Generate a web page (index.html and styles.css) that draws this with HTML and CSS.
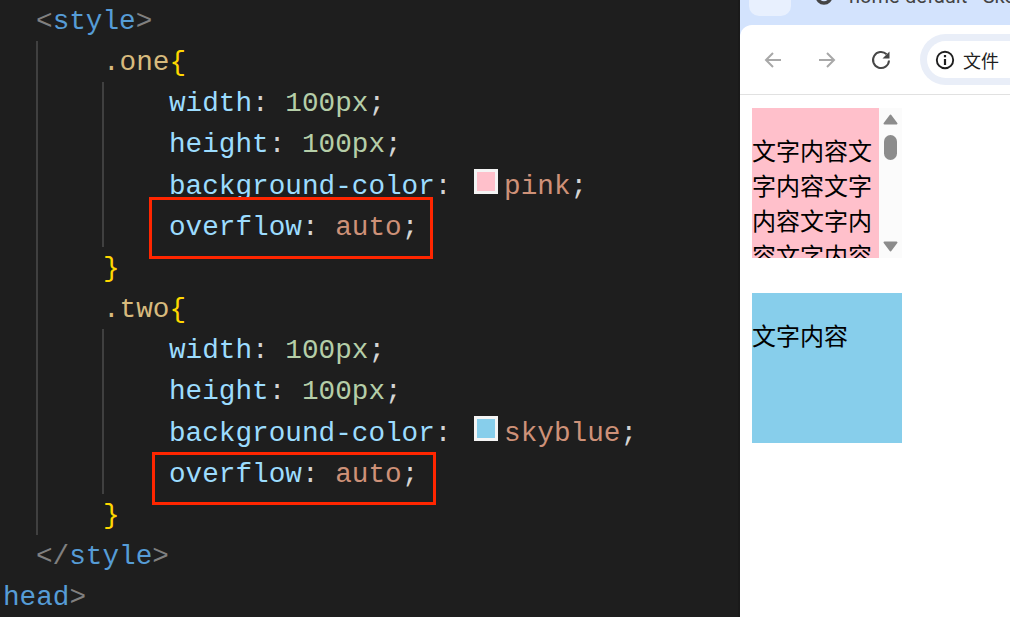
FILE: index.html
```html
<!DOCTYPE html>
<html lang="zh">
<head>
<meta charset="utf-8">
<title>overflow: auto</title>
<link rel="stylesheet" href="styles.css">
</head>
<body>
<div class="screen">
  <main class="editor">
    <div class="code">
      <div class="line lvl1"><span class="p">&lt;</span><span class="t">style</span><span class="p">&gt;</span></div>
      <div class="guide outer">
        <div class="line lvl2"><span class="s">.one</span><span class="b">{</span></div>
        <div class="guide inner">
          <div class="line lvl3"><span class="k">width</span><span class="w">: </span><span class="n">100px</span><span class="w">;</span></div>
          <div class="line lvl3"><span class="k">height</span><span class="w">: </span><span class="n">100px</span><span class="w">;</span></div>
          <div class="line lvl3"><span class="k">background-color</span><span class="w">: </span><span class="swatch pink"></span><span class="v">pink</span><span class="w">;</span></div>
          <div class="line lvl3 boxed box-one"><span class="k">overflow</span><span class="w">: </span><span class="v">auto</span><span class="w">;</span></div>
        </div>
        <div class="line lvl2"><span class="b">}</span></div>
        <div class="line lvl2"><span class="s">.two</span><span class="b">{</span></div>
        <div class="guide inner">
          <div class="line lvl3"><span class="k">width</span><span class="w">: </span><span class="n">100px</span><span class="w">;</span></div>
          <div class="line lvl3"><span class="k">height</span><span class="w">: </span><span class="n">100px</span><span class="w">;</span></div>
          <div class="line lvl3"><span class="k">background-color</span><span class="w">: </span><span class="swatch blue"></span><span class="v">skyblue</span><span class="w">;</span></div>
          <div class="line lvl3 boxed box-two"><span class="k">overflow</span><span class="w">: </span><span class="v">auto</span><span class="w">;</span></div>
        </div>
        <div class="line lvl2"><span class="b">}</span></div>
      </div>
      <div class="line lvl1"><span class="p">&lt;/</span><span class="t">style</span><span class="p">&gt;</span></div>
      <div class="line lvl0"><span class="t">head</span><span class="p">&gt;</span></div>
    </div>
  </main>
  <section class="browser">
    <div class="tabstrip">
      <div class="tab-prev"></div>
      <div class="tab-current">
        <svg class="favicon" viewBox="0 0 18 18"><circle cx="9" cy="9" r="7" fill="none" stroke="#444" stroke-width="3.4"/></svg>
        <span class="tab-title">home-default - Skeleton</span>
      </div>
    </div>
    <div class="toolbar">
      <svg class="nav" viewBox="0 0 20 20"><path d="M18 10H3M10 3l-7 7 7 7" fill="none" stroke="#a8a8a8" stroke-width="2"/></svg>
      <svg class="nav" viewBox="0 0 20 20"><path d="M2 10h15M10 3l7 7-7 7" fill="none" stroke="#a8a8a8" stroke-width="2"/></svg>
      <svg class="nav" viewBox="0 0 20 20"><path d="M18 10.5a8 8 0 1 1-2.4-6.2" fill="none" stroke="#474747" stroke-width="2"/><path d="M18.5 1.5v7h-7z" fill="#474747"/></svg>
      <div class="omnibox">
        <div class="chip">
          <svg class="info" viewBox="0 0 20 20"><circle cx="10" cy="10" r="8.2" fill="none" stroke="#1f1f1f" stroke-width="1.9"/><path d="M10 9v6M10 5v2.2" stroke="#1f1f1f" stroke-width="2.2" fill="none"/></svg>
          <span class="chip-text">文件</span>
        </div>
      </div>
    </div>
    <div class="page">
      <div class="demo one">
        <div class="demo-text">文字内容文字内容文字内容文字内容文字内容</div>
        <div class="scrollbar">
          <svg class="arrow" viewBox="0 0 15 11"><path d="M7.5 1.5L13.5 9.5H1.5z" fill="#8c8c8c" stroke="#8c8c8c" stroke-width="2" stroke-linejoin="round"/></svg>
          <span class="thumb"></span>
          <svg class="arrow down" viewBox="0 0 15 11"><path d="M7.5 9.5L13.5 1.5H1.5z" fill="#8c8c8c" stroke="#8c8c8c" stroke-width="2" stroke-linejoin="round"/></svg>
        </div>
      </div>
      <div class="demo two">
        <div class="demo-text">文字内容</div>
      </div>
    </div>
  </section>
</div>
</body>
</html>
```
FILE: styles.css
```css
* { box-sizing: border-box; }
html, body { margin: 0; padding: 0; }
body { width: 1010px; height: 617px; overflow: hidden; background: #fff; }
.screen { display: flex; width: 1010px; height: 617px; overflow: hidden; }

.editor { width: 740px; flex: none; background: #1e1e1e; overflow: hidden; border-right: 2px solid #1a1a1a; }
.code {
  padding-left: 3px;
  font-family: "Liberation Mono", monospace;
  font-size: 27.7px;
  line-height: 41.17px;
}
.line { height: 41.17px; padding-top: 2px; position: relative; display: flex; align-items: center; white-space: pre; }
.lvl1 { margin-left: 33px; }
.guide { border-left: 2px solid #404040; }
.guide.outer { margin-left: 33px; }
.guide.outer > .line { margin-left: 65px; }
.guide.inner { margin-left: 64px; }
.guide.inner > .line { margin-left: 65px; }

.p { color: #808080; }
.t { color: #569cd6; }
.s { color: #d7ba7d; }
.b { color: #ffd700; }
.k { color: #9cdcfe; }
.w { color: #d4d4d4; }
.n { color: #b5cea8; }
.v { color: #ce9178; }

.swatch { width: 24px; height: 25px; border: 3px solid #f4f4f4; margin: 0 6px 9px 6px; flex: none; }
.swatch.pink { background: #ffc0cb; }
.swatch.blue { background: #87ceeb; }

.boxed::after {
  content: "";
  position: absolute;
  box-sizing: border-box;
  border: 3px solid #ff2600;
  width: 284px;
}
.box-one::after { left: -20px; top: -9px; height: 62px; }
.box-two::after { left: -17px; top: -1px; height: 53px; }

.browser { flex: 1; min-width: 0; display: flex; flex-direction: column; background: #d3e3fd; }
.tabstrip { height: 25px; flex: none; display: flex; padding-left: 9px; overflow: hidden; }
.tab-prev { width: 42px; height: 16px; background: #e8f0fe; border-radius: 0 0 10px 10px; flex: none; }
.tab-current { display: flex; align-items: center; gap: 16px; margin: -20px 0 0 24px; height: 32px; white-space: nowrap; }
.favicon { width: 18px; height: 18px; flex: none; }
.tab-title { font: 20px "Roboto", sans-serif; color: #444; }

.toolbar {
  height: 70px; flex: none;
  background: #fff;
  border-radius: 12px 0 0 0;
  border-bottom: 1px solid #e1e1e1;
  display: flex; align-items: center;
  padding: 0 0 0 23px;
  gap: 34px;
}
.nav { width: 20px; height: 20px; flex: none; }
.omnibox {
  flex: 1; height: 51px; margin-left: -5px; margin-right: -40px;
  background: #e9eef8;
  border-radius: 26px 0 0 26px;
  padding: 7px 0 7px 7px;
}
.chip { height: 37px; background: #fff; border-radius: 19px 0 0 19px; display: flex; align-items: center; padding-left: 8px; gap: 8px; }
.info { width: 20px; height: 20px; flex: none; }
.chip-text { font: 18px "Noto Sans CJK SC", sans-serif; color: #1f1f1f; }

.page { flex: 1; background: #fff; padding: 13px 0 0 12px; display: flex; flex-direction: column; gap: 35px; }
.demo { width: 150px; height: 150px; display: flex; font: 24px/35px "Noto Sans CJK SC", sans-serif; color: #000; overflow: hidden; }
.demo-text { flex: 1; min-width: 0; padding-top: 24px; overflow: hidden; word-break: break-all; }
.one { background: #ffc0cb; }
.two { background: #87ceeb; }
.scrollbar { width: 23px; flex: none; background: #fbfbfb; display: flex; flex-direction: column; align-items: center; padding: 6px 0; }
.arrow { width: 15px; height: 11px; flex: none; }
.arrow.down { margin-top: auto; }
.thumb { width: 13px; height: 25px; background: #8c8c8c; border-radius: 7px; margin-top: 10px; }
```
